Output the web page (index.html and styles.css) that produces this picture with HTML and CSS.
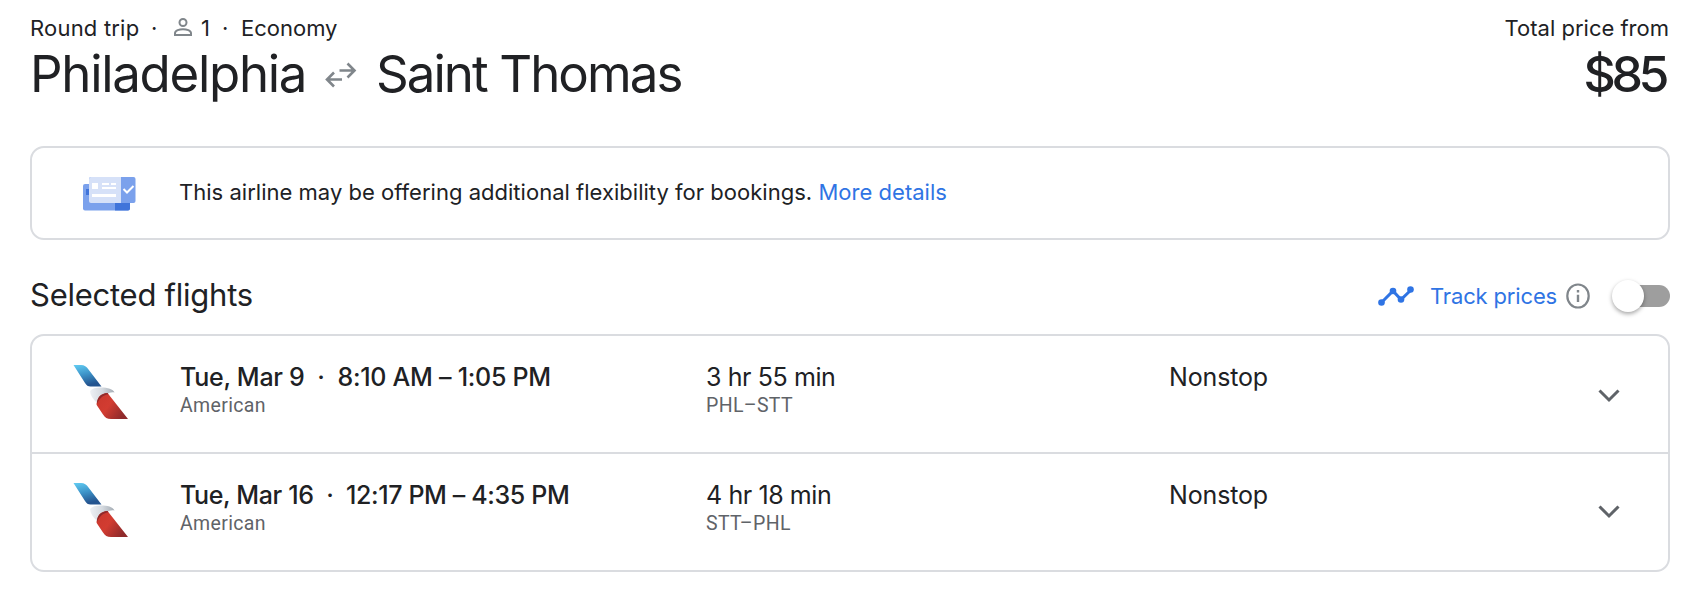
FILE: index.html
```
<!DOCTYPE html>
<html lang="en">
<head>
<meta charset="UTF-8">
<title>Philadelphia to Saint Thomas</title>
<link rel="stylesheet" href="styles.css">
</head>
<body>

<svg width="0" height="0" class="defs">
    <defs>
        <linearGradient id="blue" x1="0" y1="0" x2="0.3" y2="1">
            <stop offset="0" stop-color="#62cdf3"/>
            <stop offset="0.5" stop-color="#3d94c9"/>
            <stop offset="1" stop-color="#24548f"/>
        </linearGradient>
        <linearGradient id="red" x1="0" y1="0" x2="1" y2="0.6">
            <stop offset="0" stop-color="#c9372d"/>
            <stop offset="0.5" stop-color="#d23c31"/>
            <stop offset="1" stop-color="#8f2a2b"/>
        </linearGradient>
        <linearGradient id="grey" x1="0" y1="0" x2="1" y2="0">
            <stop offset="0" stop-color="#eef1f5"/>
            <stop offset="0.5" stop-color="#d5dae0"/>
            <stop offset="1" stop-color="#a3abb3"/>
        </linearGradient>
        <symbol id="american" viewBox="0 0 56 56">
            <path d="M.5 1H8c3.500 0 5.500 1.500 7.500 4.500L28.500 22.500H17.500c-2.500 0-4-1-5.500-3.500z" fill="url(#blue)"/>
            <path d="M17 27c2-2.500 5.500-3.500 11-3.500 7 0 12 1.500 13.500 5-3-.8-5 .4-8 1L24 39c-4-4-7-8-7-12z" fill="url(#grey)"/>
            <path d="M24 38c1-5 4-8.500 10.500-9L55 55H38c-4 0-6-1.500-8-4.500L24 41.500c-.7-1.200-.5-2 0-3.500z" fill="url(#red)"/>
            <path d="M24 38c1-5 4-8.500 10.500-9l1 1.300c-5 .7-9 3.700-11.500 9.700z" fill="#8f2a2b"/>
        </symbol>
    </defs>
</svg>

<div class="header">
    <div>
        <div class="meta">
            <span class="trip">Round trip</span>
            <span class="dot">·</span>
            <svg class="person" width="18" height="18" viewBox="0 0 18 18"><circle cx="9" cy="4.500" r="3.500"/><path d="M1 17v-1.800C1 12.500 5.500 11.200 9 11.200s8 1.300 8 4V17z"/></svg>
            <span class="count">1</span>
            <span class="dot last">·</span>
            <span class="cabin">Economy</span>
        </div>
        <div class="route">
            <span class="from">Philadelphia</span>
            <svg class="swap" width="32" height="26" viewBox="0 0 32 26"><path d="M14.500 8.500H29M22.500 1.500l7 7-7 7M17 17.500H2.500M9 10.500l-7 7 7 7"/></svg>
            <span class="to">Saint Thomas</span>
        </div>
    </div>
    <div class="total">
        <div class="total-label">Total price from</div>
        <div class="price">$85</div>
    </div>
</div>

<div class="notice">
    <svg class="tickets" width="53" height="35" viewBox="0 0 53 35">
        <rect y="8" width="47" height="26.500" rx="2" fill="#7ba1ec"/>
        <path d="M32 27h15v5.500a2 2 0 0 1-2 2H32z" fill="#4074da"/>
        <path d="M3 13h4v6H3z" fill="#4074da"/>
        <rect x="6" y="1" width="46.500" height="26" rx="2" fill="#7ba1ec"/>
        <path d="M38 1H8a2 2 0 0 0-2 2v22a2 2 0 0 0 2 2h30z" fill="#d6e1f8"/>
        <path d="M9 7h6v6H9zM19 7h7v2h-7zM28 7h5v2h-5zM19 11h14v2H19zM9 18h24v3H9z" fill="#fff"/>
        <path d="M40.500 13l3.500 3.500 6.500-6.500" fill="none" stroke="#fff" stroke-width="2"/>
    </svg>
    <p><span class="notice-text">This airline may be offering additional flexibility for bookings.</span> <a class="details">More details</a></p>
</div>

<div class="toolbar">
    <h2>Selected flights</h2>
    <div class="track">
        <svg width="36" height="20" viewBox="0 0 36 20"><path d="M4 16L15 5l8 8.500L33 4" fill="none" stroke="#2f74e4" stroke-width="3"/><g fill="#2f74e4"><circle cx="3.500" cy="16.500" r="3.300"/><circle cx="15" cy="5" r="3.300"/><circle cx="23" cy="13.500" r="3.300"/><circle cx="32.500" cy="3.500" r="3.300"/></g></svg>
        <span class="track-label">Track prices</span>
        <svg class="info" width="24" height="26" viewBox="0 0 24 26"><ellipse cx="12" cy="13" rx="10.700" ry="11.500" fill="none" stroke="#80868b" stroke-width="2.200"/><path d="M10.800 11.800h2.400V19h-2.400zM10.800 7h2.400v2.400h-2.400z" fill="#80868b"/></svg>
        <span class="switch"><span class="knob"></span></span>
    </div>
</div>

<div class="flights">
    <div class="flight">
        <svg class="logo" width="56" height="56"><use href="#american"/></svg>
        <div>
            <div class="when">Tue, Mar 9 &nbsp;·&nbsp; 8:10 AM – 1:05 PM</div>
            <div class="sub">American</div>
        </div>
        <div>
            <div class="info-text">3 hr 55 min</div>
            <div class="sub">PHL–STT</div>
        </div>
        <div class="info-text stops">Nonstop</div>
        <svg class="chevron" width="22" height="14" viewBox="0 0 22 14"><path d="M1.500 1.500l9.500 9.500 9.500-9.500"/></svg>
    </div>
    <div class="flight">
        <svg class="logo" width="56" height="56"><use href="#american"/></svg>
        <div>
            <div class="when">Tue, Mar 16 &nbsp;·&nbsp; 12:17 PM – 4:35 PM</div>
            <div class="sub">American</div>
        </div>
        <div>
            <div class="info-text">4 hr 18 min</div>
            <div class="sub">STT–PHL</div>
        </div>
        <div class="info-text stops">Nonstop</div>
        <svg class="chevron" width="22" height="14" viewBox="0 0 22 14"><path d="M1.500 1.500l9.500 9.500 9.500-9.500"/></svg>
    </div>
</div>

</body>
</html>
```
FILE: styles.css
```
* { box-sizing: border-box; }
body { margin: 0; padding: 12px 36px 20px 30px; background: #fff; color: #202124; font-family: Inter, "Open Sans", sans-serif; font-size: 22px; }
h2, p { margin: 0; font-weight: 400; }
.defs { display: block; height: 0; }

.header { display: flex; justify-content: space-between; height: 92px; }
.meta, .route { display: flex; align-items: center; white-space: nowrap; }
.meta { height: 32px; line-height: 32px; letter-spacing: -0.4px; }
.trip { width: 121px; letter-spacing: 0.2px; }
.dot { width: 22px; }
.last { width: 19px; }
.person { fill: none; stroke: #80868b; stroke-width: 2; margin: -2px 9px 0 1px; }
.count { width: 21px; }
.cabin { letter-spacing: 0; }
.route, .price { height: 60px; line-height: 60px; font-size: 51px; }
.from { width: 295px; letter-spacing: -1.3px; }
.swap { fill: none; stroke: #80868b; stroke-width: 2.6; margin: 2px 19px 0 0; }
.to { letter-spacing: -1.95px; }
.total { text-align: right; }
.total-label { height: 32px; line-height: 32px; padding-right: 1px; letter-spacing: 0; }
.price { padding-right: 5px; font-size: 50px; font-weight: 500; letter-spacing: -4.4px; }

.notice { display: flex; align-items: center; height: 94px; margin-top: 42px; padding: 0 0 2px 51px; border: 2px solid #dadce0; border-radius: 14px; letter-spacing: 0.02px; }
.tickets { margin: 2px 43px 0 0; }
.details, .track-label { color: #2f74e4; }

.toolbar { display: flex; justify-content: space-between; align-items: center; height: 48px; margin: 31px 0 15px; }
h2 { font-size: 31px; letter-spacing: -0.25px; margin-top: -2px; }
.track { display: flex; align-items: center; margin-top: 2px; }
.track-label { margin: 0 10px 0 16px; width: 126px; white-space: nowrap; letter-spacing: -0.15px; }
.switch { display: flex; align-items: center; width: 56px; height: 22px; margin-left: 24px; border-radius: 11px; background: #9e9e9e; }
.knob { width: 32px; height: 32px; margin-left: -2px; border-radius: 50%; background: #fff; box-shadow: 0 2px 4px rgba(0, 0, 0, 0.35); }

.flights { border: 2px solid #dadce0; border-radius: 14px; }
.flight { display: grid; grid-template-columns: 148px 526px 463px 1fr 22px; height: 116px; padding: 26px 48px 0 0; }
.flight + .flight { border-top: 2px solid #dadce0; height: 118px; }
.logo { margin: 2px 0 0 41px; }
.when, .info-text { font-size: 25px; line-height: 30px; white-space: nowrap; }
.when { font-weight: 500; letter-spacing: -0.27px; }
.flight + .flight .when { letter-spacing: -0.37px; }
.info-text { letter-spacing: -0.4px; }
.stops { letter-spacing: -0.15px; }
.sub { font-family: Roboto, sans-serif; font-size: 19.5px; line-height: 28px; color: #5f6368; letter-spacing: 0.35px; }
.chevron { fill: none; stroke: #5f6368; stroke-width: 3; margin-top: 27px; }
.flight + .flight .chevron { margin-top: 25px; }
```
